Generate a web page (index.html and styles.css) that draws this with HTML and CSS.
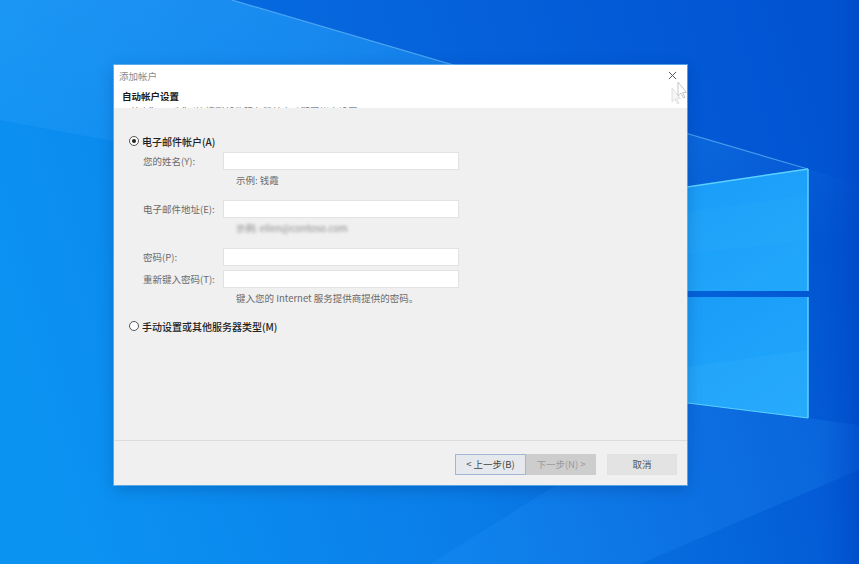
FILE: index.html
```html
<!DOCTYPE html>
<html lang="zh-CN">
<head>
    <meta charset="UTF-8">
    <meta name="viewport" content="width=device-width, initial-scale=1.0">
    <title>添加帐户</title>
    <link rel="stylesheet" href="styles.css">
</head>
<body>
    <div class="desktop">
        <svg class="wallpaper" viewBox="0 0 859 564" preserveAspectRatio="none">
            <defs>
                <linearGradient id="bg" x1="0" y1="0.55" x2="1" y2="0.35">
                    <stop offset="0" stop-color="#0b93f2"/>
                    <stop offset="0.45" stop-color="#0a7de8"/>
                    <stop offset="1" stop-color="#0150cf"/>
                </linearGradient>
                <linearGradient id="cone" x1="0" y1="0" x2="0.3" y2="1">
                    <stop offset="0" stop-color="#3aa6ff" stop-opacity=".35"/>
                    <stop offset="1" stop-color="#3aa6ff" stop-opacity="0"/>
                </linearGradient>
                <linearGradient id="pane" x1="0" y1="0" x2="1" y2="1">
                    <stop offset="0" stop-color="#1899f7"/>
                    <stop offset="1" stop-color="#21a8fb"/>
                </linearGradient>
                <linearGradient id="shade" x1="0" y1="0" x2="1" y2="0">
                    <stop offset="0" stop-color="#0150cf" stop-opacity="0"/>
                    <stop offset="1" stop-color="#0046c2" stop-opacity=".6"/>
                </linearGradient>
            </defs>
            <rect width="859" height="564" fill="url(#bg)"/>
            <polygon points="232,0 859,0 859,184" fill="#0356d6" opacity=".55"/>
            <polygon points="232,0 859,184 859,300 430,200 0,120 0,0" fill="url(#cone)"/>
            <line x1="232" y1="0" x2="808" y2="169" stroke="#7cccff" stroke-width="1.2" opacity=".55"/>
            <polygon points="687,403 808,418 859,425 859,470 640,564 430,564" fill="#2a9cff" opacity=".18"/>
            <rect x="820" y="0" width="39" height="564" fill="url(#shade)"/>
            <polygon points="600,200 808,169 808,291 600,291" fill="url(#pane)"/>
            <polygon points="600,225 808,195 808,240 600,265" fill="#3cb4ff" opacity=".12"/>
            <polygon points="600,297 808,297 808,418 600,392" fill="url(#pane)"/>
            <polygon points="600,380 808,350 808,418 600,392" fill="#3cb4ff" opacity=".22"/>
            <line x1="600" y1="200" x2="808" y2="169" stroke="#5cd2ff" stroke-width="1.5"/>
            <line x1="808" y1="169" x2="808" y2="291" stroke="#5cd2ff" stroke-width="1.5"/>
            <line x1="808" y1="297" x2="808" y2="418" stroke="#5cd2ff" stroke-width="1.5"/>
            <line x1="600" y1="392" x2="808" y2="418" stroke="#5cd2ff" stroke-width="1.2"/>
        </svg>

        <div class="dialog">
            <div class="dlg-head">
                <div class="dlg-title">添加帐户</div>
                <div class="dlg-sub">自动帐户设置</div>
                <div class="dlg-desc">单击"下一步"以连接到邮件服务器并自动配置帐户设置。</div>
                <svg class="close" viewBox="0 0 10 10"><path d="M1 1L9 9M9 1L1 9" stroke="#555" stroke-width="1.1"/></svg>
            </div>

            <div class="dlg-body">
                <div class="choice">
                    <span class="radio checked"></span>
                    <span class="choice-label">电子邮件帐户(A)</span>
                </div>

                <div class="field first">
                    <span class="field-label">您的姓名(Y):</span>
                    <span class="input"></span>
                </div>
                <div class="hint">示例: 钱霞</div>

                <div class="field spaced">
                    <span class="field-label">电子邮件地址(E):</span>
                    <span class="input"></span>
                </div>
                <div class="hint blurred">示例: ellen@contoso.com</div>

                <div class="field spaced">
                    <span class="field-label">密码(P):</span>
                    <span class="input"></span>
                </div>
                <div class="field tight">
                    <span class="field-label">重新键入密码(T):</span>
                    <span class="input"></span>
                </div>
                <div class="hint">键入您的 Internet 服务提供商提供的密码。</div>

                <div class="choice second">
                    <span class="radio"></span>
                    <span class="choice-label">手动设置或其他服务器类型(M)</span>
                </div>
            </div>

            <div class="dlg-foot">
                <span class="btn focus">&lt; 上一步(B)</span>
                <span class="btn disabled">下一步(N) &gt;</span>
                <span class="btn cancel">取消</span>
            </div>
        </div>

        <svg class="cursor" viewBox="0 0 20 26">
            <path d="M9 1L9 15L12 12L14.5 17L16 16.3L13.6 11.4L17.5 11.4Z" fill="#fff" stroke="#aaa" stroke-width=".8" opacity=".8"/>
            <path d="M3 7L3 21L6 18L8.5 23L10 22.3L7.6 17.4L11.5 17.4Z" fill="#eee" stroke="#bbb" stroke-width=".8" opacity=".55"/>
        </svg>
    </div>
</body>
</html>
```

FILE: styles.css
```css
*{
    box-sizing: border-box;
}
html,body{
    margin: 0;
    height: 100%;
    overflow: hidden;
}
body{
    font-family: "Noto Sans CJK SC", "Noto Sans", sans-serif;
    font-size: 10px;
    color: #333;
}
.desktop{
    position: relative;
    width: 859px;
    height: 564px;
    background: #0a7de8;
}
.wallpaper{
    position: absolute;
    left: 0;
    top: 0;
    width: 859px;
    height: 564px;
    display: block;
}

/* dialog window */
.dialog{
    position: absolute;
    left: 114px;
    top: 65px;
    width: 573px;
    height: 420px;
    display: flex;
    flex-direction: column;
    background: #f0f0f0;
    box-shadow: 0 0 0 1px rgba(120, 190, 240, .7), 0 4px 14px rgba(0, 30, 90, .25);
}
.dlg-head{
    position: relative;
    height: 43px;
    flex: none;
    background: #fff;
    overflow: hidden;
}
.dlg-title{
    height: 22px;
    line-height: 22px;
    padding-left: 5px;
    font-size: 9.5px;
    color: #8a8a8a;
}
.dlg-sub{
    height: 16px;
    line-height: 16px;
    margin-top: 1px;
    padding-left: 8px;
    font-size: 9.5px;
    font-weight: 600;
    color: #1a1a1a;
}
.dlg-desc{
    line-height: 14px;
    margin-top: 0;
    padding-left: 16px;
    font-size: 9.5px;
    color: #777;
}
.close{
    position: absolute;
    right: 10px;
    top: 6px;
    width: 9px;
    height: 9px;
}

.dlg-body{
    height: 333px;
    flex: none;
    padding: 25px 0 0 15px;
    border-bottom: 1px solid #dcdcdc;
}
.choice{
    display: flex;
    align-items: center;
    height: 16px;
}
.choice.second{
    margin-top: 13px;
}
.radio{
    width: 10px;
    height: 10px;
    border: 1px solid #555;
    border-radius: 50%;
    background: #fff;
    position: relative;
    margin-right: 3px;
}
.radio.checked::after{
    content: '';
    position: absolute;
    left: 2px;
    top: 2px;
    width: 4px;
    height: 4px;
    border-radius: 50%;
    background: #222;
}
.choice-label{
    font-size: 10px;
    font-weight: 500;
    color: #222;
}

.field{
    display: flex;
    align-items: center;
    height: 18px;
    padding-left: 14px;
}
.field.first{
    margin-top: 3px;
}
.field.spaced{
    margin-top: 13px;
}
.field.tight{
    margin-top: 4px;
}
.field-label{
    width: 80px;
    color: #6a6a6a;
    font-size: 9.5px;
}
.input{
    width: 236px;
    height: 18px;
    background: #fff;
    border: 1px solid #e2e2e2;
}
.hint{
    margin-top: 3px;
    padding-left: 107px;
    line-height: 14px;
    color: #6a6a6a;
    font-size: 9.5px;
}
.hint.blurred{
    color: #8a8a8a;
    filter: blur(1.4px);
}

.dlg-foot{
    flex: 1;
    display: flex;
    justify-content: flex-end;
    align-items: flex-start;
    padding: 13px 10px 0 0;
}
.btn{
    width: 70px;
    height: 21px;
    line-height: 19px;
    text-align: center;
    font-size: 9.5px;
    border: 1px solid #d6d6d6;
    background: #e3e3e3;
    color: #555;
}
.btn.focus{
    width: 71px;
    background: #e5e9ee;
    border-color: #9fb8d8;
    color: #444;
}
.btn.disabled{
    background: #cdcdcd;
    border-color: #cdcdcd;
    color: #9a9a9a;
}
.btn.cancel{
    margin-left: 11px;
    border-color: #e1e1e1;
}

.cursor{
    position: absolute;
    left: 669px;
    top: 81px;
    width: 20px;
    height: 26px;
}
```
